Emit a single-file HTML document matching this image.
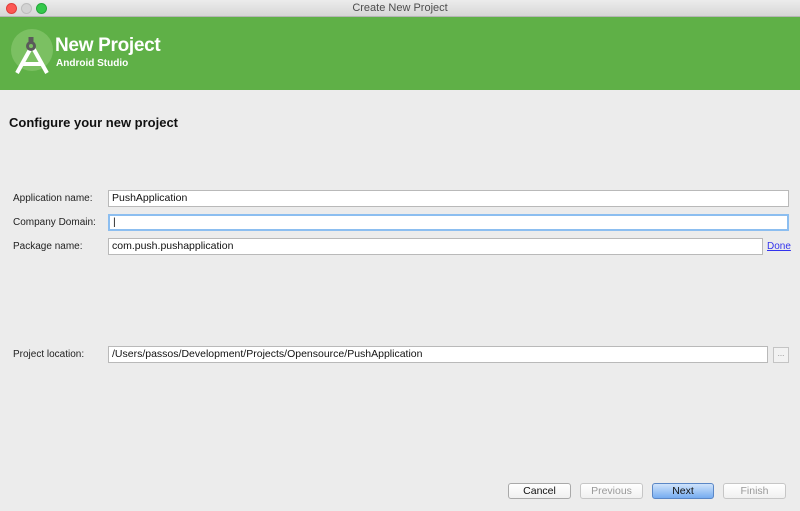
<!DOCTYPE html><html><head><style>
*{margin:0;padding:0;box-sizing:border-box}
body{width:800px;height:511px;background:#ececec;font-family:"Liberation Sans",sans-serif;position:relative;overflow:hidden}
.a{position:absolute}
.tb{left:0;top:0;width:800px;height:17px;background:linear-gradient(#ececec,#d6d6d6);border-bottom:1px solid #b5b5b5;font-size:11px;color:#4d4d4d;text-align:center;line-height:17px}
.dot{top:3px;width:11px;height:11px;border-radius:50%}
.g{left:0;top:17px;width:800px;height:73px;background:#5fb047}
.lbl{font-size:10px;color:#222;left:13px}
.f{background:#fff;border:1px solid #b9b9b9;height:17px;font-size:10.5px;line-height:15px;padding-left:3px;color:#111}
.btn{height:16px;border:1px solid #a9a9a9;border-radius:3px;background:linear-gradient(#fff,#f0f0f0);font-size:10.5px;text-align:center;line-height:14px;color:#111}
</style></head><body>
<div class="a tb">Create New Project</div>
<div class="a dot" style="left:6px;background:#fc5753;border:1px solid #df3e3a"></div>
<div class="a dot" style="left:21px;background:#d3d3d3;border:1px solid #bdbdbd"></div>
<div class="a dot" style="left:36px;background:#34c84a;border:1px solid #24a73a"></div>
<div class="a g"></div>
<svg class="a" style="left:10px;top:28px" width="45" height="48" viewBox="0 0 45 48">
<circle cx="22" cy="22" r="21" fill="#7bc062"/>
<path d="M7 45 L22 18 M37 45 L22 18 M11 36 H33" stroke="#fff" stroke-width="4" fill="none"/>
<circle cx="21" cy="18" r="5" fill="#5a5a5a"/><rect x="18.5" y="9" width="5" height="6" fill="#5a5a5a"/>
<circle cx="21" cy="18" r="2" fill="#7bc062"/>
</svg>
<div class="a" style="left:55px;top:35px;font-size:19px;color:#fff;font-weight:bold;letter-spacing:-0.3px">New Project</div>
<div class="a" style="left:56px;top:58px;font-size:10px;color:#fff;font-weight:bold">Android Studio</div>
<div class="a" style="left:9px;top:115px;font-size:13px;font-weight:bold;color:#111">Configure your new project</div>
<div class="a lbl" style="top:193px">Application name:</div>
<div class="a f" style="left:108px;top:190px;width:681px">PushApplication</div>
<div class="a lbl" style="top:217px">Company Domain:</div>
<div class="a f" style="left:108px;top:214px;width:681px;border:2px solid #8cbef0;line-height:13px">|</div>
<div class="a lbl" style="top:241px">Package name:</div>
<div class="a f" style="left:108px;top:238px;width:655px">com.push.pushapplication</div>
<div class="a" style="left:767px;top:241px;font-size:10px;color:#3333ee;text-decoration:underline">Done</div>
<div class="a lbl" style="top:349px">Project location:</div>
<div class="a f" style="left:108px;top:346px;width:660px">/Users/passos/Development/Projects/Opensource/PushApplication</div>
<div class="a" style="left:773px;top:347px;width:16px;height:16px;border:1px solid #c4c4c4;background:#f2f2f2;font-size:8px;text-align:center;color:#888;line-height:12px">...</div>
<div class="a btn" style="left:508px;top:483px;width:63px">Cancel</div>
<div class="a btn" style="left:580px;top:483px;width:63px;color:#999;border-color:#c6c6c6">Previous</div>
<div class="a btn" style="left:652px;top:483px;width:62px;background:linear-gradient(#cfe3fb,#76acf0);border-color:#5b87c6">Next</div>
<div class="a btn" style="left:723px;top:483px;width:63px;color:#999;border-color:#c6c6c6">Finish</div>
</body></html>
